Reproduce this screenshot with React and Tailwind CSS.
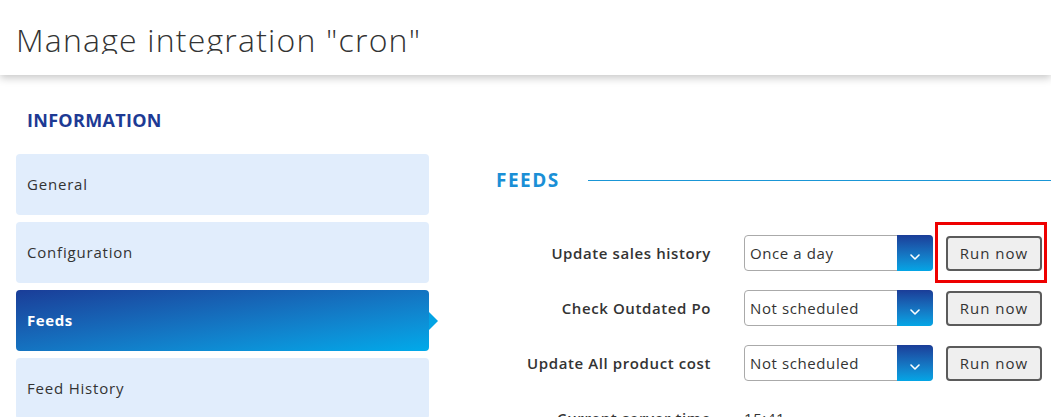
import React from 'react';

const menu = [
  { label: 'General' },
  { label: 'Configuration' },
  { label: 'Feeds', active: true },
  { label: 'Feed History' },
];

const feeds = [
  { label: 'Update sales history', value: 'Once a day', marked: true },
  { label: 'Check Outdated Po', value: 'Not scheduled' },
  { label: 'Update All product cost', value: 'Not scheduled' },
];

const Chevron = () => (
  <svg width="10" height="6" viewBox="0 0 10 6" fill="none" className="mt-[8px]">
    <path d="M1 1l4 4 4-4" stroke="#fff" strokeWidth="1.6" strokeLinecap="round" strokeLinejoin="round" />
  </svg>
);

const ScheduleSelect = ({ value }) => (
  <div className="flex h-[36px] w-[189px] rounded-[4px] border border-[#aaaaaa] bg-white">
    <div className="flex flex-1 items-center pl-[5px] text-[15px] tracking-[0.6px] text-[#333]">{value}</div>
    <div className="-my-px -mr-px flex w-[36px] items-center justify-center rounded-r-[4px] bg-gradient-to-b from-[#1b3d98] to-[#03a6e6]">
      <Chevron />
    </div>
  </div>
);

const RunButton = ({ marked }) => (
  <div className="relative">
    <button className="h-[35px] w-[96px] rounded-[4px] border-2 border-[#5b5b5b] bg-[#efefef] text-[15px] tracking-[1px] text-[#333]">
      Run now
    </button>
    {marked && (
      <div className="absolute -left-[11px] -right-[5px] -top-[14px] -bottom-[12px] border-[3px] border-[#ee0000]" />
    )}
  </div>
);

const App = () => {
  return (
    <div className="h-[417px] w-full overflow-hidden bg-white text-[#333]" style={{ fontFamily: '"Open Sans", "Noto Sans", sans-serif' }}>
      {/* header */}
      <div className="relative z-10 h-[75px] bg-white pl-4 shadow-[0_3px_8px_rgba(0,0,0,0.22)]">
        <div className="h-[54px] overflow-hidden pt-[20px]">
          <h1 className="text-[32px] font-light leading-[40px] tracking-[1.2px] text-[#333]">Manage integration "cron"</h1>
        </div>
      </div>

      <div className="flex pl-4">
        {/* left column */}
        <div className="w-[413px] shrink-0 pt-[33px]">
          <h2 className="pl-[11px] text-[18px] font-bold leading-[24px] tracking-[0.3px] text-[#1d3a94]">INFORMATION</h2>
          <div className="mt-[22px] flex flex-col gap-[7px]">
            {menu.map((item) =>
              item.active ? (
                <div key={item.label} className="relative">
                  <div className="flex h-[61px] items-center rounded-[4px] bg-gradient-to-br from-[#1a3d98] to-[#00aaea] pl-[11px] text-[15px] font-bold tracking-[0.6px] text-white">
                    {item.label}
                  </div>
                  <div className="absolute -right-[9px] top-[22px] h-0 w-0 border-y-[9px] border-l-[9px] border-y-transparent border-l-[#03a3e4]" />
                </div>
              ) : (
                <div key={item.label} className="flex h-[61px] items-center rounded-[4px] bg-[#e1edfc] pl-[11px] text-[15px] tracking-[0.8px] text-[#333]">
                  {item.label}
                </div>
              )
            )}
          </div>
        </div>

        {/* right column */}
        <div className="ml-[67px] flex-1 pt-[93px]">
          <div className="flex items-center">
            <h3 className="text-[19px] font-bold leading-[24px] tracking-[1.5px] text-[#1a8fd6]">FEEDS</h3>
            <div className="ml-[28px] h-px flex-1 bg-[#1a96d6]" />
          </div>

          <div className="mt-[43px] flex flex-col gap-[19px]">
            {feeds.map((f) => (
              <div key={f.label} className="flex items-center">
                <div className="w-[248px] pr-[33px] text-right text-[15px] font-semibold tracking-[0.6px] text-[#333]">{f.label}</div>
                <ScheduleSelect value={f.value} />
                <div className="ml-[13px]">
                  <RunButton marked={f.marked} />
                </div>
              </div>
            ))}
            <div className="flex h-[36px] items-center">
              <div className="w-[248px] pr-[33px] text-right text-[15px] font-semibold tracking-[0.6px] text-[#333]">Current server time</div>
              <div className="text-[15px] tracking-[0.6px] text-[#333]">15:41</div>
            </div>
          </div>
        </div>
      </div>
    </div>
  );
};

export default App;
